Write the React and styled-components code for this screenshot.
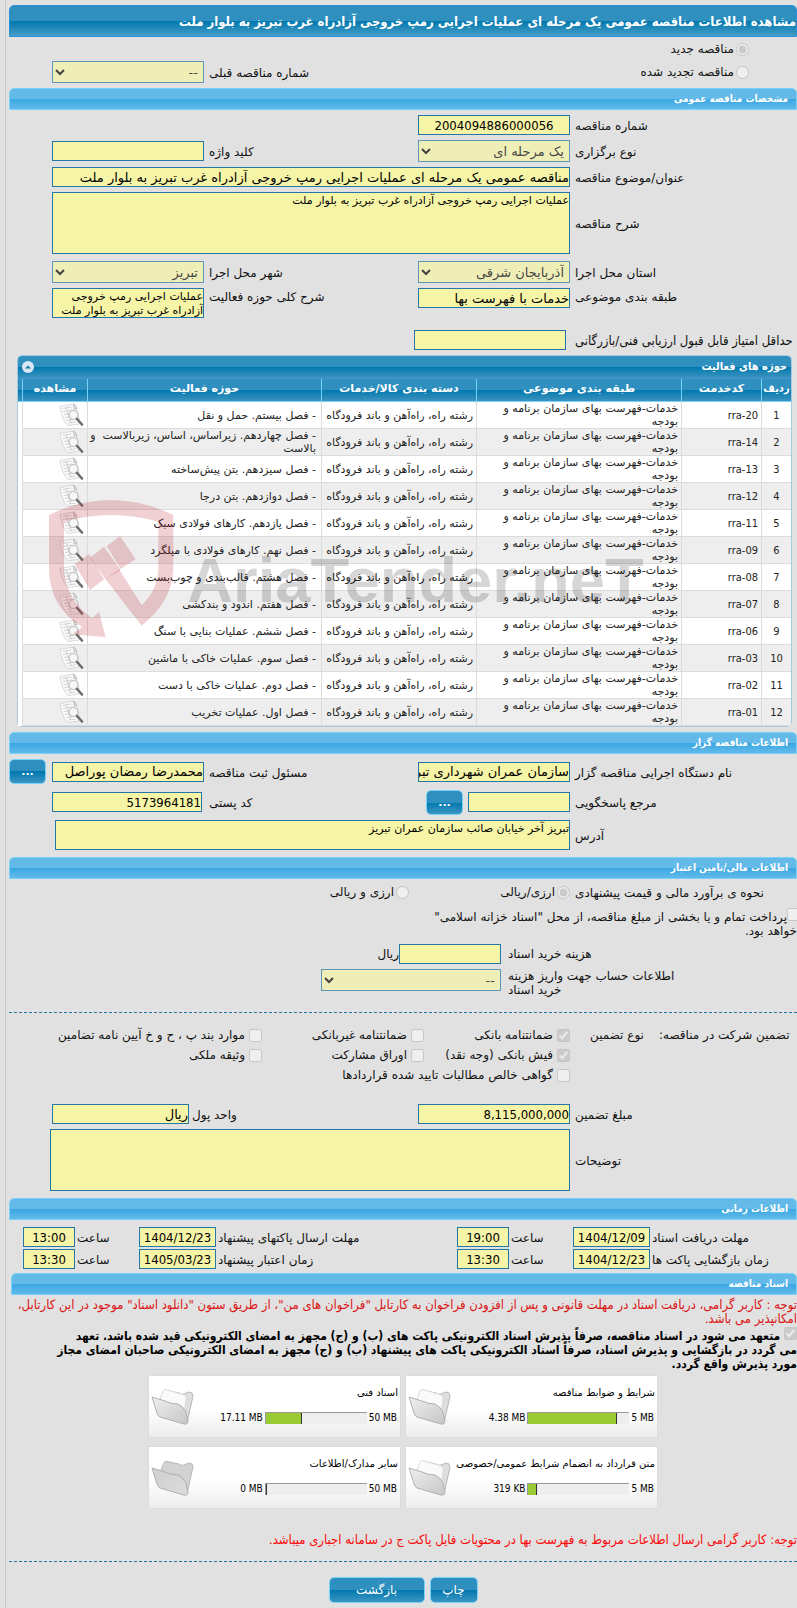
import React from "react";
import styled, { createGlobalStyle, css } from "styled-components";

const narrow = `"DejaVu Sans Condensed", "DejaVu Sans", sans-serif`;

const GlobalStyle = createGlobalStyle`
  * { box-sizing: border-box; }
  body {
    margin: 0;
    background: #e1e1e1;
    color: #111;
    font-family: "DejaVu Sans", sans-serif;
    font-size: 12px;
    line-height: 14px;
    overflow-x: hidden;
  }
  input, select, textarea, button { font-family: inherit; }
`;

const Page = styled.main`
  margin-left: 5px;
  padding: 5px 0 5px 3px;
  border-left: 1px solid #c9c9c9;
  overflow: hidden;
`;

const TitleBar = styled.h1`
  margin: 0;
  height: 32px;
  border: 1px solid #2a90dc;
  border-radius: 5px 5px 0 0;
  background: linear-gradient(#2f90c0 0 50%, #0078ae 50%, #479dc6);
  color: #fff;
  font-family: ${narrow};
  font-size: 13px;
  line-height: 31px;
  white-space: nowrap;
`;

const SectionBar = styled.h2`
  margin: 0 0 0 ${(p) => p.$indent || 0}px;
  padding: 0 8px;
  height: 22px;
  border: 1px solid #79d2f9;
  border-radius: 5px 5px 0 0;
  background: linear-gradient(#63bae9 0 50%, #38a7e2 50%, #63bae9);
  color: #fff;
  font-family: ${narrow};
  font-size: 10px;
  line-height: 20px;
`;

const Form = styled.section`
  display: flex;
  flex-direction: column;
  gap: 5px;
  padding: ${(p) => p.$pad || "5px 0 7px"};
`;

const KindRows = styled.section`
  padding-bottom: 5px;
`;

const Row = styled.div`
  display: grid;
  grid-template-columns: 227px 152px 1fr ${(p) => p.$last || "152px"} 43px;
  align-items: ${(p) => p.$align || "center"};
  min-height: ${(p) => p.$h || 20}px;
  margin-top: ${(p) => p.$top || 0}px;
`;

const CurrencyRow = styled.div`
  display: grid;
  grid-template-columns: 227px 161px 1fr;
  align-items: center;
  height: 14px;
`;

const Label = styled.label`
  padding-top: 2px;
  padding-left: ${(p) => p.$gap || 5}px;
  text-align: left;
  white-space: nowrap;
`;

const NarrowLabel = styled(Label)`
  font-family: ${narrow};
  font-size: 13px;
`;

const field = css`
  display: block;
  width: 100%;
  margin: 0;
  border: 1px solid #2577a8;
  border-radius: 0;
  background: #f6f4a6;
  color: #000;
  outline: none;
`;

const Input = styled.input`
  ${field}
  width: ${(p) => (p.$w ? p.$w + "px" : "100%")};
  height: 20px;
  padding: 0;
  font-size: 13px;
  text-align: right;
`;

const NumberInput = styled(Input)`
  font-family: ${narrow};
  text-align: ${(p) => p.$align || "right"};
`;

const ScoreInput = styled(Input)`
  margin-right: 4px;
`;

const WideInput = styled(Input)`
  grid-column: 2 / 5;
`;

const Area = styled.textarea`
  ${field}
  height: ${(p) => p.$h}px;
  padding: 1px 0;
  font-size: 11px;
  line-height: 14px;
  resize: none;
  overflow: hidden;
`;

const WideArea = styled(Area)`
  grid-column: 2 / 5;
  justify-self: start;
  width: calc(100% - ${(p) => p.$trim || 0}px);
`;

const Select = styled.select`
  ${field}
  width: ${(p) => (p.$w ? p.$w + "px" : "100%")};
  height: 22px;
  padding: 0 1px;
  font-size: 13px;
  opacity: 0.7;
`;

const ButtonBase = styled.button`
  border: 1px solid #79d2f9;
  border-radius: 5px;
  background: linear-gradient(#2f90c0 0 50%, #0078ae 50%, #3c96c3);
  color: #fff;
  padding: 0;
  height: 26px;
  font-size: 12px;
`;

const DotsButton = styled(ButtonBase)`
  width: 37px;
  height: 25px;
  font-size: 11px;
  font-weight: bold;
`;

const ActionButton = styled(ButtonBase)`
  width: ${(p) => p.$w}px;
`;

const Inline = styled.div`
  display: flex;
  align-items: center;
  gap: 5px;
`;

const EndCell = styled.div`
  display: flex;
  justify-content: flex-end;
`;

const Tick = styled.input`
  flex: none;
  width: 13px;
  height: 13px;
  margin: 0;
  vertical-align: baseline;
`;

const OptionLabel = styled.label`
  display: flex;
  align-items: center;
  gap: ${(p) => p.$gap ?? 4}px;
  white-space: nowrap;
`;

const RadioCell = styled.div`
  padding-right: 48px;
`;

const Panel = styled.section`
  position: relative;
  margin: 0 5px 5px 8px;
  border: 1px solid #a6c9e2;
  border-radius: 5px;
  background: #fff;
`;

const PanelHead = styled.header`
  display: flex;
  justify-content: space-between;
  align-items: center;
  height: 23px;
  padding: 0 4px;
  border-bottom: 1px solid #4297d7;
  border-radius: 4px 4px 0 0;
  background: linear-gradient(#2f90c0 0 50%, #0078ae 50%, #3c93bf);
  color: #fff;
  font-family: ${narrow};
  font-size: 11px;
  font-weight: bold;
`;

const Collapse = styled.button`
  display: flex;
  padding: 0;
  border: 0;
  background: none;
`;

const Table = styled.table`
  width: 100%;
  table-layout: fixed;
  border-collapse: separate;
  border-spacing: 0;
  font-size: 11px;
  line-height: 13px;
  color: #222;
  td, th {
    padding: 0 3px;
    height: 27px;
    border-left: 1px solid #dcdcdc;
    border-bottom: 1px solid #dcdcdc;
    text-align: right;
    overflow: hidden;
  }
  th {
    height: 23px;
    padding: 0 0 3px;
    border-color: #79d2f9;
    background: linear-gradient(#2f90c0 0 50%, #0078ae 50%, #3c93bf);
    color: #fff;
    text-align: center;
    white-space: nowrap;
  }
  th:first-child { font-family: ${narrow}; }
  tbody tr:nth-child(even) td { background: #eee; }
  td:first-child { text-align: center; font-family: ${narrow}; }
  td:nth-child(2) { font-family: ${narrow}; }
  td:nth-child(5) { padding: 0 5px 0 0; }
  tr > :last-child { border-left: 0; padding: 0; }
  tbody tr > td:last-child, tbody tr:nth-child(even) > td:last-child {
    border-bottom: 0;
    background: #fff;
  }
  svg { display: block; }
`;

const Watermark = styled.svg`
  position: absolute;
  left: 21px;
  top: 134px;
  width: 610px;
  height: 160px;
  pointer-events: none;
`;

const Dashed = styled.hr`
  width: 100%;
  height: 0;
  margin: ${(p) => p.$m};
  border: 0;
  border-top: 1px dashed #2577a8;
`;

const TreasuryNote = styled.div`
  margin: 5px 0 1px;
  white-space: nowrap;
`;

const EdgeTick = styled(Tick)`
  margin-right: -3px;
`;

const FeeRow = styled.div`
  display: grid;
  grid-template-columns: 296px auto 1fr;
  align-items: ${(p) => p.$align || "center"};
`;

const FeeLabel = styled.label`
  justify-self: end;
  max-width: 190px;
  padding-left: 7px;
  text-align: left;
`;

const Guarantee = styled.div`
  display: grid;
  grid-template-columns: 227px 146px 162px 1fr;
  grid-auto-rows: 20px;
  align-items: center;
`;

const GuaranteeTitle = styled.div`
  display: flex;
  justify-content: flex-end;
  gap: 15px;
  padding-left: 20px;
  white-space: nowrap;
`;

const GuaranteeOption = styled(OptionLabel)`
  grid-column: ${(p) => p.$col};
`;

const TimeGrid = styled.section`
  display: grid;
  grid-template-columns: 147px 77px 64px 52px 1fr 77px 64px 52px 14px;
  row-gap: 2px;
  align-items: center;
  padding: 7px 0 4px;
`;

const Spacer = styled.span``;

const Notice = styled.p`
  margin: ${(p) => p.$m};
  color: ${(p) => p.$color};
  font-family: ${narrow};
  font-size: 13px;
`;

const Pledge = styled.label`
  display: block;
  margin: 1px 0 4px;
  color: #000;
  font-family: ${narrow};
  font-weight: bold;
  white-space: nowrap;
`;

const Cards = styled.div`
  display: grid;
  grid-template-columns: repeat(2, 253px);
  gap: 8px 4px;
  justify-content: center;
`;

const Card = styled.article`
  display: flex;
  justify-content: space-between;
  height: 63px;
  padding: 10px 2px 0 2px;
  border: 1px solid #dcdcdc;
  background: linear-gradient(#fff 55%, #ececec);
  font-family: ${narrow};
  font-size: 10px;
  color: #000;
`;

const CardBody = styled.div`
  display: flex;
  flex-direction: column;
  gap: 12px;
`;

const CardTitle = styled.h3`
  margin: 0;
  font-family: "DejaVu Sans", sans-serif;
  font-size: 10px;
  line-height: 14px;
  font-weight: normal;
  white-space: nowrap;
`;

const Usage = styled.div`
  display: flex;
  align-items: center;
  gap: 2px;
  height: 12px;
  direction: ltr;
  justify-content: flex-end;
  padding-right: 1px;
  white-space: nowrap;
`;

const Track = styled.div`
  width: 102px;
  height: 12px;
  border: solid #999;
  border-width: 1px 0 0 1px;
  background: #eee;
`;

const Fill = styled.div`
  height: 100%;
  border-right: 1px solid #333;
  background: #9acb34;
`;

const Actions = styled.footer`
  display: flex;
  justify-content: center;
  gap: 5px;
`;

const DocIcon = () => (
  <svg width="25" height="24" viewBox="0 0 25 24" role="img" aria-label="مشاهده">
    <path d="M1 3.500L14.500 1Q19 7 20 15Q21 19 20 21L9 22.500Q3 17 1 3.500Z" fill="#fafafa" stroke="#cfcfcf" strokeWidth=".8" />
    <path d="M3.500 5.500l9-1.500M4 8.500l9-1.500M5 11.500l6-1M6 14.500l5-.800M7.500 17.500l6-1M9.500 20l7-1M7 4.500l5 15" stroke="#c6c6c6" strokeWidth=".8" fill="none" />
    <path d="M14.500 1Q17 2 18 6L15 6Z" fill="#ddd" stroke="#aaa" strokeWidth=".6" />
    <circle cx="14.500" cy="12" r="4.500" fill="#f6f6f6" fillOpacity=".9" stroke="#b8b8b8" strokeWidth="1" />
    <path d="M18 16l5 5.500" stroke="#6c6c6c" strokeWidth="2.600" strokeLinecap="round" />
  </svg>
);

const FolderIcon = ({ empty }) => (
  <svg width="44" height="40" viewBox="0 0 44 40" aria-hidden="true">
    <defs>
      <linearGradient id={empty ? "flapE" : "flapF"} x1="0" y1="0" x2="1" y2="1">
        <stop offset="0" stopColor={empty ? "#cfcfcf" : "#efefef"} />
        <stop offset="1" stopColor={empty ? "#dcdcdc" : "#c6c6c6"} />
      </linearGradient>
    </defs>
    <path d="M10 13L13 5.500Q14 4 16 4.500L28 7Q30 9 33 8L38 6Q42 6 42 10L36 37L10 29Z" fill={empty ? "#d2d2d2" : "#dedede"} stroke="#b8b8b8" />
    {!empty && <path d="M9 13L12 5Q13 3 15 3.500L33 9Q36 10 35 14L33 28Z" fill="#fafafa" stroke="#dcdcdc" />}
    <path d="M1 11L14 15Q20 18 27 18Q32 20 35 26L37 36Q36 39 33 38L9 31Q7 30 6 27Z" fill={`url(#${empty ? "flapE" : "flapF"})`} stroke="#b0b0b0" />
  </svg>
);

const columns = [30, 80, 205, 155, undefined, 65, 4];
const headings = ["ردیف", "کدخدمت", "طبقه بندی موضوعی", "دسته بندی کالا/خدمات", "حوزه فعالیت", "مشاهده", ""];

const activities = [
  ["20", "فصل بیستم. حمل و نقل"],
  ["14", "فصل چهاردهم. زیراساس، اساس، زیربالاست\u00a0 و بالاست"],
  ["13", "فصل سیزدهم. بتن پیش‌ساخته"],
  ["12", "فصل دوازدهم. بتن درجا"],
  ["11", "فصل یازدهم. کارهای فولادی سبک"],
  ["09", "فصل نهم. کارهای فولادی با میلگرد"],
  ["08", "فصل هشتم. قالب‌بندی و چوب‌بست"],
  ["07", "فصل هفتم. اندود و بندکشی"],
  ["06", "فصل ششم. عملیات بنایی با سنگ"],
  ["03", "فصل سوم. عملیات خاکی با ماشین"],
  ["02", "فصل دوم. عملیات خاکی با دست"],
  ["01", "فصل اول. عملیات تخریب"],
];

const files = [
  ["شرایط و ضوابط مناقصه", "5 MB", "4.38 MB", 88],
  ["اسناد فنی", "50 MB", "17.11 MB", 36],
  ["متن قرارداد به انضمام شرایط عمومی/خصوصی", "5 MB", "319 KB", 8],
  ["سایر مدارک/اطلاعات", "50 MB", "0 MB", 0],
];

const guarantees = [
  ["ضمانتنامه بانکی", 2, true],
  ["ضمانتنامه غیربانکی", 3, false],
  ["موارد بند پ ، ح و خ آیین نامه تضامین", 4, false],
  ["فیش بانکی (وجه نقد)", 2, true],
  ["اوراق مشارکت", 3, false],
  ["وثیقه ملکی", 4, false],
  ["گواهی خالص مطالبات تایید شده قراردادها", "2 / 5", false],
];

const times = [
  ["مهلت دریافت اسناد", "1404/12/09", "19:00", "مهلت ارسال پاکتهای پیشنهاد", "1404/12/23", "13:00"],
  ["زمان بازگشایی پاکت ها", "1404/12/23", "13:30", "زمان اعتبار پیشنهاد", "1405/03/23", "13:30"],
];

function TimePair({ id, label, date, hour }) {
  return (
    <>
      <Label $gap={2} htmlFor={id + "d"}>{label}</Label>
      <NumberInput id={id + "d"} $align="center" defaultValue={date} readOnly dir="ltr" />
      <Label $gap={2} htmlFor={id + "h"}>ساعت</Label>
      <NumberInput id={id + "h"} $align="center" defaultValue={hour} readOnly dir="ltr" />
    </>
  );
}

export default function App() {
  return (
    <Page dir="rtl" lang="fa">
      <GlobalStyle />
      <TitleBar>مشاهده اطلاعات مناقصه عمومی یک مرحله ای عملیات اجرایی رمپ خروجی آزادراه غرب تبریز به بلوار ملت</TitleBar>

      <KindRows>
        <Row $h={24}>
          <RadioCell>
            <OptionLabel $gap={2}>
              <Tick type="radio" name="kind" defaultChecked disabled />مناقصه جدید
            </OptionLabel>
          </RadioCell>
        </Row>
        <Row $h={22}>
          <RadioCell>
            <OptionLabel $gap={2}>
              <Tick type="radio" name="kind" disabled />مناقصه تجدید شده
            </OptionLabel>
          </RadioCell>
          <Spacer />
          <Label htmlFor="prev">شماره مناقصه قبلی</Label>
          <Select id="prev" disabled><option>--</option></Select>
        </Row>
      </KindRows>

      <SectionBar>مشخصات مناقصه عمومی</SectionBar>
      <Form $pad="5px 0">
        <Row>
          <Label htmlFor="number">شماره مناقصه</Label>
          <NumberInput id="number" $align="center" defaultValue="2004094886000056" readOnly />
        </Row>
        <Row $h={22}>
          <Label htmlFor="type">نوع برگزاری</Label>
          <Select id="type" disabled><option>یک مرحله ای</option></Select>
          <Label htmlFor="keyword">کلید واژه</Label>
          <Input id="keyword" readOnly />
        </Row>
        <Row>
          <Label htmlFor="subject">عنوان/موضوع مناقصه</Label>
          <WideInput id="subject" readOnly defaultValue="مناقصه عمومی یک مرحله ای عملیات اجرایی رمپ خروجی آزادراه غرب تبریز به بلوار ملت" />
        </Row>
        <Row>
          <Label htmlFor="desc">شرح مناقصه</Label>
          <WideArea id="desc" $h={62} readOnly defaultValue="عملیات اجرایی رمپ خروجی آزادراه غرب تبریز به بلوار ملت" />
        </Row>
        <Row $h={22} $top={2}>
          <Label htmlFor="province">استان محل اجرا</Label>
          <Select id="province" disabled><option>آذربایجان شرقی</option></Select>
          <Label htmlFor="city">شهر محل اجرا</Label>
          <Select id="city" disabled><option>تبریز</option></Select>
        </Row>
        <Row $align="start">
          <Label htmlFor="class">طبقه بندی موضوعی</Label>
          <Input id="class" readOnly defaultValue="خدمات با فهرست بها" />
          <Label htmlFor="scope">شرح کلی حوزه فعالیت</Label>
          <Area id="scope" $h={30} readOnly defaultValue="عملیات اجرایی رمپ خروجی آزادراه غرب تبریز به بلوار ملت" />
        </Row>
        <Row $top={7}>
          <NarrowLabel htmlFor="score">حداقل امتیاز قابل قبول ارزیابی فنی/بازرگانی</NarrowLabel>
          <ScoreInput id="score" readOnly />
        </Row>
      </Form>

      <Panel>
        <PanelHead>
          حوزه های فعالیت
          <Collapse type="button" aria-label="بستن">
            <svg width="12" height="12" viewBox="0 0 12 12">
              <circle cx="6" cy="6" r="6" fill="#d8e7f3" />
              <path d="M3 7.500L6 4.500L9 7.500Z" fill="#1878a8" />
            </svg>
          </Collapse>
        </PanelHead>
        <Table>
          <colgroup>
            {columns.map((w, i) => <col key={i} width={w} />)}
          </colgroup>
          <thead>
            <tr>
              {headings.map((h, i) => (
                <th key={i} scope="col">{h}</th>
              ))}
            </tr>
          </thead>
          <tbody>
            {activities.map(([code, name], i) => (
              <tr key={code}>
                <td>{i + 1}</td>
                <td><bdi dir="ltr">rra-{code}</bdi></td>
                <td>خدمات-فهرست بهای سازمان برنامه و بودجه</td>
                <td>رشته راه، راه‌آهن و باند فرودگاه</td>
                <td>- {name}</td>
                <td><DocIcon /></td>
                <td />
              </tr>
            ))}
          </tbody>
        </Table>
        <Watermark viewBox="0 0 1830 480" aria-hidden="true" direction="ltr">
          <g fill="#b4141e" fillOpacity=".2">
            <path d="M30 75Q215-15 403 75V235Q400 335 308 407L200 268L240 238L308 345Q357 300 358 235V95Q215 55 75 95V235Q80 330 160 385L180 365L200 441L98 433L130 412Q30 350 30 235Z" />
            <path d="M107 222L150 192L195 268L153 300Z" />
            <path d="M153 203L195 170L245 240L200 268Z" />
            <path d="M203 168L243 138L290 207L245 237Z" />
          </g>
          <text x="445" y="335" fill="#000" fillOpacity=".16" fontFamily="Liberation Sans, sans-serif" fontWeight="bold" fontSize="190">AriaTender.neT</text>
        </Watermark>
      </Panel>

      <SectionBar>اطلاعات مناقصه گزار</SectionBar>
      <Form>
        <Row $h={25}>
          <Label htmlFor="org">نام دستگاه اجرایی مناقصه گزار</Label>
          <Input id="org" readOnly defaultValue="سازمان عمران شهرداری تبریز" />
          <Label htmlFor="officer">مسئول ثبت مناقصه</Label>
          <Input id="officer" readOnly defaultValue="محمدرضا رمضان پوراصل" />
          <EndCell><DotsButton type="button">...</DotsButton></EndCell>
        </Row>
        <Row $h={26}>
          <Label htmlFor="ref">مرجع پاسخگویی</Label>
          <Inline>
            <Input id="ref" $w={102} readOnly />
            <DotsButton type="button">...</DotsButton>
          </Inline>
          <Label htmlFor="postal">کد پستی</Label>
          <EndCell><NumberInput id="postal" $w={150} readOnly defaultValue="5173964181" /></EndCell>
        </Row>
        <Row>
          <Label htmlFor="address">آدرس</Label>
          <WideArea id="address" $h={30} $trim={3} readOnly defaultValue="تبریز آخر خیابان صائب سازمان عمران تبریز" />
        </Row>
      </Form>

      <SectionBar>اطلاعات مالی/تامین اعتبار</SectionBar>
      <Form>
        <CurrencyRow>
          <Label as="span">نحوه ی برآورد مالی و قیمت پیشنهادی</Label>
          <OptionLabel $gap={2}><Tick type="radio" name="cur" defaultChecked disabled />ارزی/ریالی</OptionLabel>
          <OptionLabel $gap={2}><Tick type="radio" name="cur" disabled />ارزی و ریالی</OptionLabel>
        </CurrencyRow>
        <TreasuryNote>
          <EdgeTick type="checkbox" id="treasury" disabled />
          <label htmlFor="treasury">پرداخت تمام و یا بخشی از مبلغ مناقصه، از محل "اسناد خزانه اسلامی"<br />خواهد بود.</label>
        </TreasuryNote>
        <FeeRow>
          <FeeLabel htmlFor="fee">هزینه خرید اسناد</FeeLabel>
          <Input id="fee" $w={102} readOnly />
          <span>ریال</span>
        </FeeRow>
        <FeeRow $align="start">
          <FeeLabel htmlFor="account">اطلاعات حساب جهت واریز هزینه<br />خرید اسناد</FeeLabel>
          <Select id="account" $w={180} disabled><option>--</option></Select>
        </FeeRow>
        <Dashed $m="10px 0 7px" />
        <Guarantee>
          <GuaranteeTitle><span>تضمین شرکت در مناقصه:</span><span>نوع تضمین</span></GuaranteeTitle>
          {guarantees.map(([text, col, on]) => (
            <GuaranteeOption key={text} $col={col}>
              <Tick type="checkbox" defaultChecked={on} disabled />{text}
            </GuaranteeOption>
          ))}
        </Guarantee>
        <Row $top={14} $last="137px">
          <Label htmlFor="amount">مبلغ تضمین</Label>
          <NumberInput id="amount" readOnly defaultValue="8,115,000,000" />
          <Label $gap={3} htmlFor="unit">واحد پول</Label>
          <Input id="unit" readOnly defaultValue="ریال" />
        </Row>
        <Row>
          <Label htmlFor="notes">توضیحات</Label>
          <WideArea id="notes" $h={62} $trim={-2} readOnly />
        </Row>
      </Form>

      <SectionBar>اطلاعات زمانی</SectionBar>
      <TimeGrid>
        {times.map((t, i) => (
          <React.Fragment key={i}>
            <TimePair id={"a" + i} label={t[0]} date={t[1]} hour={t[2]} />
            <TimePair id={"b" + i} label={t[3]} date={t[4]} hour={t[5]} />
            <Spacer />
          </React.Fragment>
        ))}
      </TimeGrid>

      <SectionBar $indent={2}>اسناد مناقصه</SectionBar>
      <Notice $m="3px 0 0" $color="#dc1414">
        توجه : کاربر گرامی، دریافت اسناد در مهلت قانونی و پس از افزودن فراخوان به کارتابل "فراخوان های من"، از طریق ستون "دانلود اسناد" موجود در این کارتابل، امکانپذیر می باشد.
      </Notice>
      <Pledge>
        <Tick type="checkbox" defaultChecked disabled /> متعهد می شود در اسناد مناقصه، صرفاً پذیرش اسناد الکترونیکی پاکت های (ب) و (ج) مجهز به امضای الکترونیکی قید شده باشد. تعهد<br />
        می گردد در بازگشایی و پذیرش اسناد، صرفاً اسناد الکترونیکی پاکت های پیشنهاد (ب) و (ج) مجهز به امضای الکترونیکی صاحبان امضای مجاز<br />
        مورد پذیرش واقع گردد.
      </Pledge>
      <Cards>
        {files.map(([title, max, used, pct]) => (
          <Card key={title}>
            <CardBody>
              <CardTitle>{title}</CardTitle>
              <Usage>
                <span>{used}</span>
                <Track><Fill style={{ width: pct + "%" }} /></Track>
                <span>{max}</span>
              </Usage>
            </CardBody>
            <FolderIcon empty={pct === 0} />
          </Card>
        ))}
      </Cards>
      <Notice $m="24px 0 14px" $color="#fa0a0a">
        توجه: کاربر گرامی ارسال اطلاعات مربوط به فهرست بها در محتویات فایل پاکت ج در سامانه اجباری میباشد.
      </Notice>
      <Dashed $m="0 0 15px" />
      <Actions>
        <ActionButton type="button" $w={48}>چاپ</ActionButton>
        <ActionButton type="button" $w={96}>بازگشت</ActionButton>
      </Actions>
    </Page>
  );
}
